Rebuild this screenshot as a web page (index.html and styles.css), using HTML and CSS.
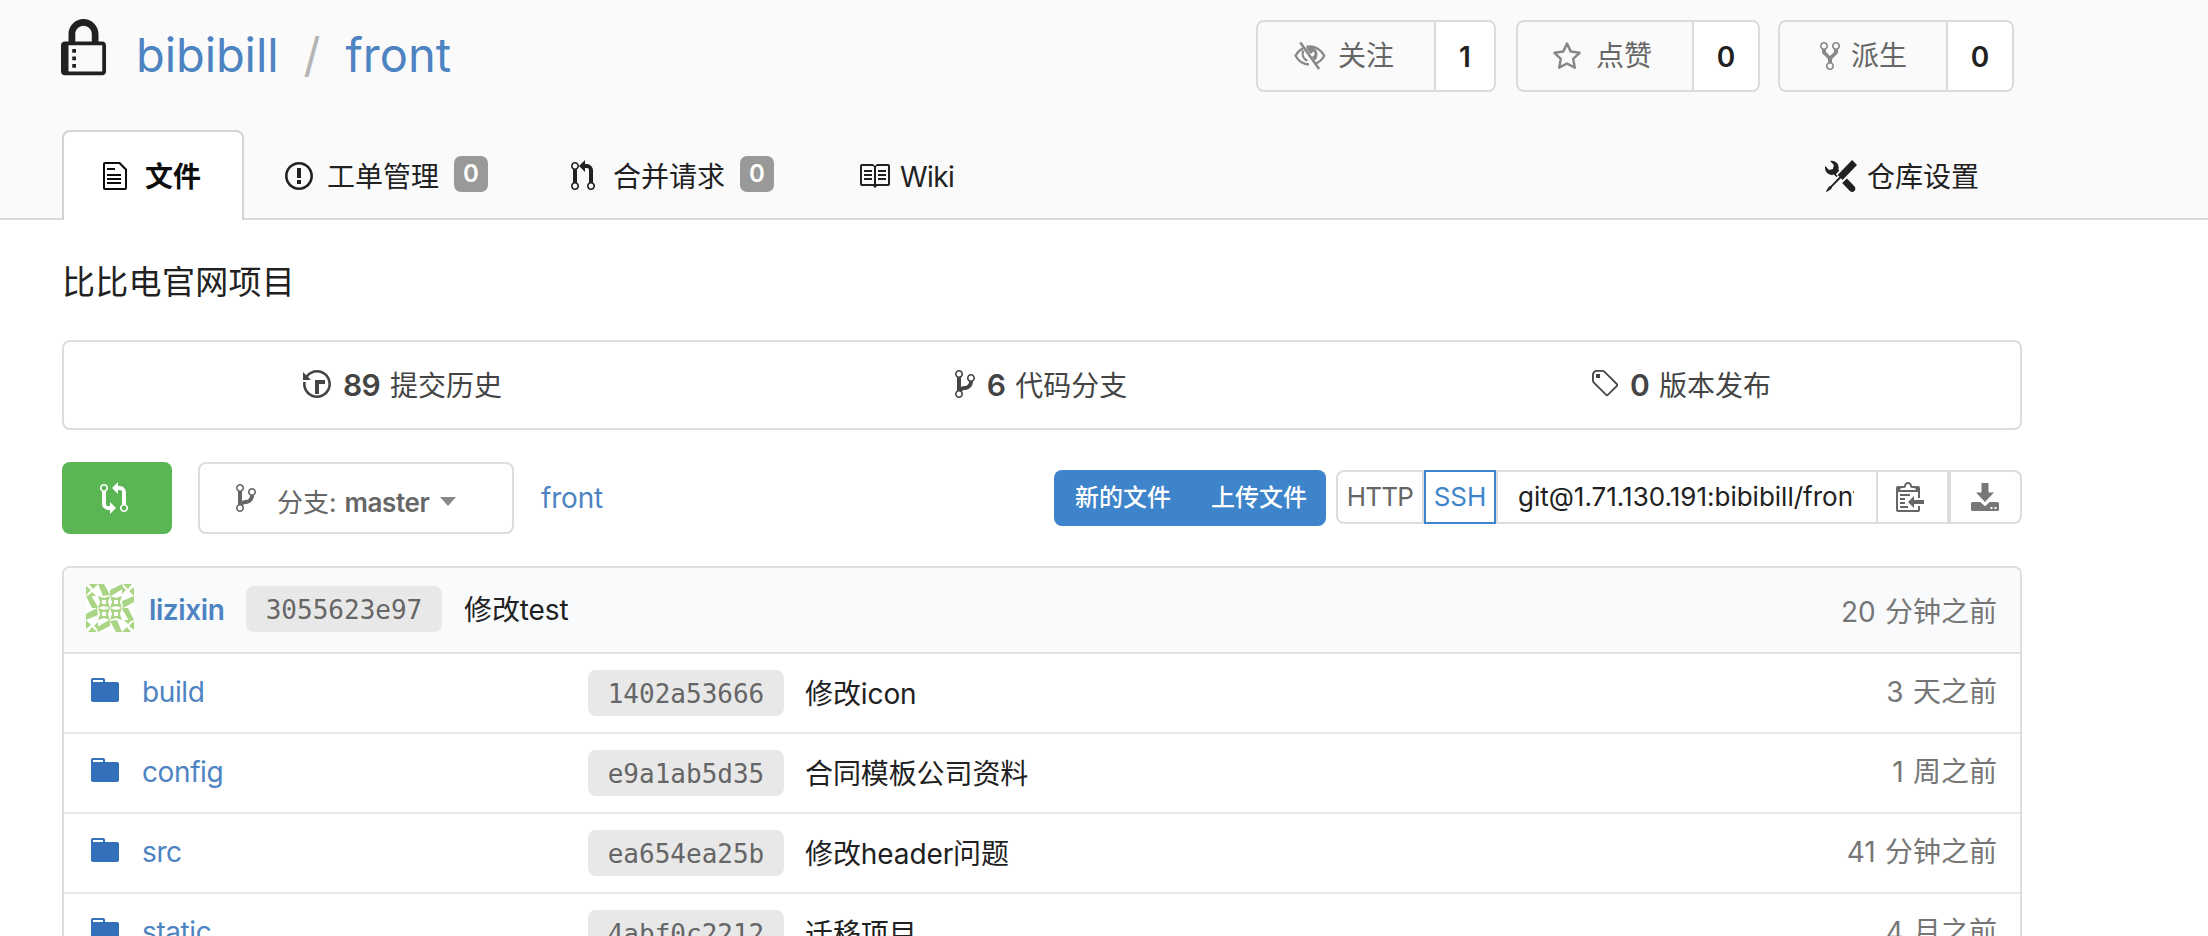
FILE: index.html
```html
<!DOCTYPE html>
<html lang="zh-CN">
<head>
<meta charset="utf-8">
<title>bibibill/front</title>
<link rel="stylesheet" href="styles.css">
</head>
<body>
<svg class="defs" width="0" height="0">
  <symbol id="i-branch" viewBox="0 0 10 16"><path d="M10 5c0-1.11-.89-2-2-2a1.993 1.993 0 0 0-1 3.72v.3c-.02.52-.23.98-.63 1.38-.4.4-.86.61-1.38.63-.83.02-1.48.16-2 .45V4.72a1.993 1.993 0 0 0-1-3.72C.88 1 0 1.89 0 3a2 2 0 0 0 1 1.72v6.56c-.59.35-1 .99-1 1.72 0 1.11.89 2 2 2 1.11 0 2-.89 2-2 0-.53-.2-1-.53-1.36.09-.06.48-.41.59-.47.25-.11.56-.17.94-.17 1.05-.05 1.95-.45 2.75-1.25S8.95 7.77 9 6.73h-.02C9.59 6.37 10 5.73 10 5zM2 1.8c.66 0 1.2.55 1.2 1.2 0 .65-.55 1.2-1.2 1.2C1.35 4.2.8 3.65.8 3c0-.65.55-1.2 1.2-1.2zm0 12.41c-.66 0-1.2-.55-1.2-1.2 0-.65.55-1.2 1.2-1.2.65 0 1.2.55 1.2 1.2 0 .65-.55 1.2-1.2 1.2zm6-8c-.66 0-1.2-.55-1.2-1.2 0-.65.55-1.2 1.2-1.2.65 0 1.2.55 1.2 1.2 0 .65-.55 1.2-1.2 1.2z"/></symbol>
  <symbol id="i-folder" viewBox="0 0 14 16"><path d="M13 4H7V3c0-.66-.31-1-1-1H1c-.55 0-1 .45-1 1v10c0 .55.45 1 1 1h12c.55 0 1-.45 1-1V5c0-.55-.45-1-1-1zM6 4H1V3h5v1z"/></symbol>
</svg>

<header class="header">
  <div class="container title-row">
    <svg class="lock" viewBox="0 0 12 16"><path d="M4 13H3v-1h1v1zm8-6v7c0 .55-.45 1-1 1H1c-.55 0-1-.45-1-1V7c0-.55.45-1 1-1h1V4c0-2.2 1.8-4 4-4s4 1.8 4 4v2h1c.55 0 1 .45 1 1zM3.8 6h4.41V4c0-1.22-.98-2.2-2.2-2.2-1.22 0-2.2.98-2.2 2.2v2H3.8zM11 7H2v7h9V7zM4 8H3v1h1V8zm0 2H3v1h1v-1z"/></svg>
    <div class="repo-title"><a class="owner">bibibill</a><span class="slash">/</span><a class="repo">front</a></div>
    <div class="actions">
      <div class="action watch">
        <span class="action-label"><svg class="i32" viewBox="0 0 32 32"><g fill="none" stroke="currentColor" stroke-width="2.3"><path d="M9 8.200C5.500 10 3 13 1.500 15.800c2.800 5 7.500 8.600 13.500 8.700M12.500 6.900C20.500 5 27.500 10 30.300 15.800c-1.900 3.500-4.800 6.300-8.300 7.700M9.300 10.500c-1.600 4-.2 8.300 4 10.300"/><path d="M6.300 2.500l18.800 26.500" stroke-width="2.500"/></g><path d="M12 8c5-2.500 11.500.5 11.500 6.500 0 2.500-1 4.700-2.800 6.200l-3-4.300c1.700.2 2.900-1 2.900-2.600 0-1.200-.6-2.200-1.700-2.600 0 1.500-1.300 2.700-2.900 2.300z"/></svg><span>关注</span></span><b class="action-count">1</b>
      </div>
      <div class="action star">
        <span class="action-label"><svg class="i30" viewBox="0 0 30 30"><path d="M15 2.600l3.800 8 8.800 1.200-6.400 6.100 1.600 8.800-7.800-4.200-7.800 4.200L8.800 17.900 2.400 11.800l8.800-1.200z" fill="none" stroke="currentColor" stroke-width="2.500" stroke-linejoin="round"/></svg><span>点赞</span></span><b class="action-count">0</b>
      </div>
      <div class="action fork">
        <span class="action-label"><svg class="i20" viewBox="0 0 10 16"><path d="M8 1a1.993 1.993 0 0 0-1 3.720V6L5 8 3 6V4.720A1.993 1.993 0 0 0 2 1a1.993 1.993 0 0 0-1 3.720V6.500l3 3v1.780A1.993 1.993 0 0 0 5 15a1.993 1.993 0 0 0 1-3.720V9.500l3-3V4.720A1.993 1.993 0 0 0 8 1zM2 4.200C1.340 4.200.8 3.650.8 3c0-.65.55-1.200 1.200-1.200.65 0 1.200.55 1.200 1.200 0 .65-.55 1.200-1.200 1.200zm3 10c-.66 0-1.200-.55-1.200-1.200 0-.65.55-1.200 1.200-1.200.65 0 1.200.55 1.200 1.200 0 .65-.55 1.200-1.200 1.200zm3-10c-.66 0-1.200-.55-1.200-1.200 0-.65.55-1.200 1.200-1.200.65 0 1.200.55 1.200 1.200 0 .65-.55 1.200-1.200 1.200z"/></svg><span>派生</span></span><b class="action-count">0</b>
      </div>
    </div>
  </div>
  <nav class="container tabs">
    <a class="tab active"><svg class="i24" viewBox="0 0 12 16"><path d="M6 5H2V4h4v1zM2 8h7V7H2v1zm0 2h7V9H2v1zm0 2h7v-1H2v1zm10-7.500V14c0 .55-.45 1-1 1H1c-.55 0-1-.45-1-1V2c0-.55.45-1 1-1h7.500L12 4.500zM11 5L8 2H1v12h10V5z"/></svg><span>文件</span></a>
    <a class="tab issues"><svg class="i28" viewBox="0 0 14 16"><path d="M7 2.300c3.140 0 5.700 2.560 5.700 5.700s-2.560 5.700-5.700 5.700A5.710 5.710 0 0 1 1.300 8c0-3.140 2.560-5.700 5.700-5.700zM7 1C3.140 1 0 4.140 0 8s3.140 7 7 7 7-3.140 7-7-3.140-7-7-7zm1 3H6v5h2V4zm0 6H6v2h2v-2z"/></svg><span>工单管理</span><b class="badge">0</b></a>
    <a class="tab pulls"><svg class="i24" viewBox="0 0 12 16"><path d="M11 11.280V5c-.03-.78-.34-1.470-.94-2.060C9.460 2.350 8.780 2.030 8 2H7V0L4 3l3 3V4h1c.27.02.48.11.69.31.21.2.3.42.31.69v6.280A1.993 1.993 0 0 0 10 15a1.993 1.993 0 0 0 1-3.720zm-1 2.920c-.66 0-1.200-.55-1.200-1.200 0-.65.55-1.200 1.200-1.200.65 0 1.200.55 1.200 1.200 0 .65-.55 1.200-1.200 1.200zM4 3c0-1.110-.89-2-2-2a1.993 1.993 0 0 0-1 3.720v6.560A1.993 1.993 0 0 0 2 15a1.993 1.993 0 0 0 1-3.720V4.720c.59-.34 1-.98 1-1.720zm-.8 10c0 .66-.55 1.200-1.200 1.200-.65 0-1.200-.55-1.200-1.200 0-.65.55-1.200 1.200-1.200.65 0 1.200.55 1.200 1.200zM2 4.200C1.340 4.200.8 3.650.8 3c0-.65.55-1.200 1.200-1.200.65 0 1.200.55 1.200 1.200 0 .65-.55 1.200-1.200 1.200z"/></svg><span>合并请求</span><b class="badge">0</b></a>
    <a class="tab wiki"><svg class="i32" viewBox="0 0 16 16"><path d="M3 5h4v1H3V5zm0 3h4V7H3v1zm0 2h4V9H3v1zm11-5h-4v1h4V5zm0 2h-4v1h4V7zm0 2h-4v1h4V9zm2-6v9c0 .55-.45 1-1 1H9.500l-1 1-1-1H2c-.55 0-1-.45-1-1V3c0-.55.45-1 1-1h5.500l1 1 1-1H15c.55 0 1 .45 1 1zm-8 .5L7.500 3H2v9h6V3.500zm7-.5H9.500l-.5.5V12h6V3z"/></svg><span>Wiki</span></a>
    <a class="tab settings"><svg class="i32" viewBox="0 0 16 16"><path d="M4.480 7.270c.26.26 1.280 1.330 1.280 1.330l.56-.58-.88-.91 1.690-1.800s-.76-.74-.43-.45c.32-1.190.03-2.510-.87-3.440C4.930.5 3.660.2 2.520.51l1.930 2-.51 1.960-1.890.52-1.930-1.990C-.19 4.170.1 5.480 1 6.400c.94.98 2.290 1.260 3.480.87zm6.440 1.940l-2.330 2.300 3.840 3.980c.31.33.73.49 1.140.49.41 0 .82-.16 1.140-.49.63-.65.63-1.700 0-2.350l-3.790-3.930zM16 2.530L13.550 0 6.330 7.460l.88.91-4.310 4.460-.99.53-1.390 2.270.35.37 2.200-1.440.51-1.020L7.900 9.080l.88.91L16 2.530z"/></svg><span>仓库设置</span></a>
  </nav>
</header>

<main class="container">
  <p class="description">比比电官网项目</p>

  <section class="stats">
    <a class="stat"><svg class="i28" viewBox="0 0 14 16"><path d="M8 13H6V6h5v2H8v5zM7 1C4.810 1 2.870 2.020 1.590 3.590L0 2v4h4L2.500 4.500C3.550 3.170 5.170 2.300 7 2.300c3.140 0 5.700 2.560 5.700 5.700s-2.560 5.700-5.700 5.700A5.710 5.710 0 0 1 1.300 8c0-.34.03-.67.09-1H.08C.03 7.330 0 7.660 0 8c0 3.860 3.140 7 7 7s7-3.140 7-7-3.140-7-7-7z"/></svg><b>89</b><span>提交历史</span></a>
    <a class="stat branches"><svg class="i20"><use href="#i-branch"/></svg><b>6</b><span>代码分支</span></a>
    <a class="stat releases"><svg class="i28" viewBox="0 0 14 16"><path d="M7.730 1.730C7.260 1.260 6.620 1 5.960 1H3.500C2.130 1 1 2.130 1 3.500v2.470c0 .66.27 1.300.73 1.770l6.060 6.060c.39.39 1.020.39 1.410 0l4.590-4.590a.996.996 0 0 0 0-1.410L7.730 1.730zM2.380 7.090c-.31-.3-.47-.7-.47-1.130V3.500c0-.88.72-1.590 1.590-1.590h2.470c.42 0 .83.16 1.130.47l6.140 6.130-4.730 4.730-6.130-6.150zM3.010 3h2v2H3V3h.01z"/></svg><b>0</b><span>版本发布</span></a>
  </section>

  <section class="toolbar">
    <a class="compare"><svg class="i28" viewBox="0 0 14 16"><path d="M5 12H4c-.27-.02-.48-.11-.69-.31-.21-.2-.3-.42-.31-.69V4.720A1.993 1.993 0 0 0 2 1a1.993 1.993 0 0 0-1 3.720V11c.03.78.34 1.470.94 2.060.6.59 1.280.91 2.060.94h1v2l3-3-3-3v2zM2 1.800c.66 0 1.200.55 1.200 1.200 0 .65-.55 1.200-1.200 1.200C1.340 4.200.8 3.650.8 3c0-.65.55-1.200 1.200-1.200zm11 9.480V5c-.03-.78-.34-1.470-.94-2.060-.6-.59-1.280-.91-2.060-.94H9V0L6 3l3 3V4h1c.27.02.48.11.69.31.21.2.3.42.31.69v6.280A1.993 1.993 0 0 0 12 15a1.993 1.993 0 0 0 1-3.720zm-1 2.920c-.66 0-1.200-.55-1.200-1.200 0-.65.55-1.200 1.200-1.200.65 0 1.200.55 1.200 1.200 0 .65-.55 1.200-1.200 1.200z"/></svg></a>
    <div class="branch-select"><svg class="i20"><use href="#i-branch"/></svg><span class="branch-text">分支:</span><b>master</b><i class="caret"></i></div>
    <a class="crumb">front</a>
    <div class="file-buttons"><a>新的文件</a><a>上传文件</a></div>
    <div class="clone">
      <button class="http">HTTP</button>
      <button class="ssh">SSH</button>
      <div class="url"><span>git@1.71.130.191:bibibill/front.git</span></div>
      <button class="copy"><svg class="i28" viewBox="0 0 14 16"><path d="M2 13h4v1H2v-1zm5-6H2v1h5V7zm2 3V8l-3 3 3 3v-2h5v-2H9zM4.500 9H2v1h2.500V9zM2 12h2.500v-1H2v1zm9 1h1v2c-.02.28-.11.52-.3.7-.19.18-.42.28-.7.3H1c-.55 0-1-.45-1-1V4c0-.55.45-1 1-1h3c0-1.110.89-2 2-2 1.110 0 2 .89 2 2h3c.55 0 1 .45 1 1v5h-1V6H1v9h10v-2zM2 5h8c0-.55-.45-1-1-1H8c-.55 0-1-.45-1-1s-.45-1-1-1-1 .45-1 1-.45 1-1 1H3c-.55 0-1 .45-1 1z"/></svg></button>
      <button class="download"><svg class="i28" viewBox="0 0 28 32"><path d="M10.500 3h7v9.500H23L14 22 5 12.500h5.500zM1.500 22h7.800l4.700 4.300 4.700-4.300h7.800q1.500 0 1.500 1.500v6q0 1.500-1.500 1.500h-25Q0 31 0 29.500v-6Q0 22 1.500 22zm18 5v2h2v-2zm4 0v2h2v-2z" fill-rule="evenodd"/></svg></button>
    </div>
  </section>

  <section class="files">
    <div class="row latest">
      <svg class="avatar" viewBox="0 0 48 48"><rect width="48" height="48" fill="#fff"/>
        <g fill="#a9d585">
          <g id="av-q"><path d="M12 0h6l6 11-7 1zM24 11V6l12-6 1.500 4.500L25 12zM3 0h9L7 5zM0 2v9l5-5zM2 12l4-4 4 4z"/><path fill-rule="evenodd" d="M12 12l6 2 6-2-2 6 2 6-6-2-6 2 2-6zM16 16v4h4v-4z"/></g>
          <use href="#av-q" transform="rotate(90 24 24)"/><use href="#av-q" transform="rotate(180 24 24)"/><use href="#av-q" transform="rotate(270 24 24)"/>
        </g>
      </svg>
      <b class="author">lizixin</b><code class="sha">3055623e97</code><span class="message">修改test</span><time>20 分钟之前</time>
    </div>
    <div class="row"><div class="name"><svg class="i28"><use href="#i-folder"/></svg><a>build</a></div><code class="sha">1402a53666</code><span class="message">修改icon</span><time>3 天之前</time></div>
    <div class="row"><div class="name"><svg class="i28"><use href="#i-folder"/></svg><a>config</a></div><code class="sha">e9a1ab5d35</code><span class="message">合同模板公司资料</span><time>1 周之前</time></div>
    <div class="row"><div class="name"><svg class="i28"><use href="#i-folder"/></svg><a>src</a></div><code class="sha">ea654ea25b</code><span class="message">修改header问题</span><time>41 分钟之前</time></div>
    <div class="row"><div class="name"><svg class="i28"><use href="#i-folder"/></svg><a>static</a></div><code class="sha">4abf0c2212</code><span class="message">迁移项目</span><time>4 月之前</time></div>
  </section>
</main>
</body>
</html>
```
FILE: styles.css
```css
* { box-sizing: border-box; }
html, body { margin: 0; height: 936px; overflow: hidden; }
body {
  font: 28px/40px Inter, "Noto Sans CJK SC", sans-serif;
  color: #212121;
  background: #fff;
  white-space: nowrap;
}
svg { display: block; flex: none; fill: currentColor; }
.defs { position: absolute; }
.i20 { width: 20px; height: 32px; }
.i24 { width: 24px; height: 32px; }
.i28 { width: 28px; height: 32px; }
.i30 { width: 30px; height: 30px; }
.i32 { width: 32px; height: 32px; }
.container { width: 1960px; margin-left: 62px; }

/* Header */
.header { height: 220px; background: #fafafa; border-bottom: 2px solid #d9d9d9; }
.title-row { display: flex; height: 130px; align-items: flex-start; }
.lock { width: 45px; height: 60px; margin: 19px 0 0 -1px; }
.repo-title { display: flex; margin: 23px 0 0 30px; font-size: 47px; line-height: 64px; }
.repo-title a { color: #4e83c2; }
.owner { letter-spacing: -.1px; }
.slash { width: 67px; text-align: center; color: #b5b5b5; }
.actions { display: flex; margin: 20px 8px 0 auto; }
.action { display: flex; height: 72px; border: 2px solid #dbdbdb; border-radius: 8px; overflow: hidden; color: #666; }
.action svg { color: #888; }
.action-label { display: flex; align-items: center; flex: none; height: 68px; }
.action-count { flex: 1; background: #fff; border-left: 2px solid #dbdbdb; text-align: center; line-height: 70px; font-weight: 600; color: #212121; }
.watch { width: 240px; }
.watch .action-label { width: 176px; padding-left: 36px; gap: 12px; }
.star { width: 244px; margin-left: 20px; }
.star .action-label { width: 174px; padding-left: 34px; gap: 14px; }
.fork { width: 236px; margin-left: 18px; }
.fork .action-label { width: 166px; padding-left: 40px; gap: 11px; }

/* Tabs */
.tabs { display: flex; height: 90px; align-items: center; }
.tab { display: flex; align-items: center; height: 90px; padding-top: 2px; }
.tab span { padding-top: 2px; }
.active { width: 182px; padding: 0 0 0 39px; gap: 18px; font-weight: 600; color: #0d0d0d; background: #fff; border: 2px solid #d4d4d5; border-bottom: 0; border-radius: 8px 8px 0 0; }
.issues { margin-left: 41px; gap: 14px; }
.pulls { margin-left: 83px; gap: 18px; }
.wiki { margin-left: 84px; gap: 10px; letter-spacing: -.6px; }
.settings { margin: 0 43px 0 auto; gap: 10px; }
.badge { width: 34px; height: 36px; margin: -4px 0 0 1px; border-radius: 7px; background: #999; color: #fff; font-size: 24px; line-height: 35px; text-align: center; font-weight: 600; }
.pulls .badge { margin-left: -3px; }

/* Summary */
.description { margin: 0; padding-top: 42px; height: 120px; font-size: 33px; line-height: 40px; letter-spacing: .3px; }
.stats { display: grid; grid-template-columns: 677px 600px 679px; height: 90px; border: 2px solid #ddd; border-radius: 8px; color: #444; }
.stat { display: flex; justify-content: center; align-items: center; }
.stat b { font-size: 30px; font-weight: 600; margin: 0 10px 0 12px; letter-spacing: -.8px; }
.stat span { padding-top: 2px; }
.stat svg { margin-top: -2px; }

/* Toolbar */
.toolbar { display: flex; margin-top: 32px; height: 72px; color: #666; }
.compare { width: 110px; padding: 20px 0 0 38px; background: #5ab655; color: #fff; border-radius: 8px; }
.branch-select { display: flex; width: 316px; margin-left: 26px; padding: 18px 0 0 36px; border: 2px solid #ddd; border-radius: 8px; font-size: 26px; }
.branch-text { margin: 1px 0 0 21px; }
.branch-select b { margin: 1px 0 0 8px; font-weight: 600; letter-spacing: -.4px; }
.caret { margin: 15px 0 0 11px; border: solid transparent; border-width: 9px 8px 0; border-top-color: #888; height: 0; }
.crumb { margin: 16px 0 0 27px; letter-spacing: -.2px; color: #4e83c2; }
.file-buttons { display: flex; width: 272px; height: 56px; margin: 8px 10px 0 auto; border-radius: 8px; background: #3d84ca; color: #fff; font-size: 24px; font-weight: 500; line-height: 55px; }
.file-buttons a { padding-left: 21px; width: 137px; }
.clone { display: flex; width: 686px; height: 54px; margin-top: 8px; font-size: 26px; }
.clone button { display: flex; align-items: center; justify-content: center; font: inherit; padding: 0; background: #fff; border: 2px solid #ddd; color: #666; }
.clone .http { width: 88px; border-radius: 8px 0 0 8px; letter-spacing: -.8px; }
.clone .ssh { width: 72px; border-color: #3d84ca; color: #3d84ca; }
.url { width: 380px; padding: 5px 22px 0 20px; border: solid #ddd; border-width: 2px 0 2px 2px; color: #212121; }
.url span { display: block; overflow: hidden; }
.clone .copy { width: 73px; padding-right: 5px; }
.clone .download { width: 73px; border-radius: 0 8px 8px 0; padding-right: 2px; color: #777; }
.clone svg { margin-top: -2px; }

/* File list */
.files { margin-top: 32px; border: 2px solid #ddd; border-bottom: 0; border-radius: 8px 8px 0 0; overflow: hidden; height: 370px; }
.row { display: flex; height: 80px; border-bottom: 2px solid #e8e8e8; }
.latest { height: 86px; background: #f9fafc; border-color: #e2e2e3; }
.row:last-child { height: 42px; border-bottom: 0; }
.avatar { width: 48px; height: 48px; margin: 16px 0 0 22px; }
.author { width: 81px; margin: 22px 0 0 15px; font-weight: 600; letter-spacing: -.4px; color: #4e83c2; }
.name { display: flex; width: 524px; padding-left: 27px; color: #3370b9; }
.name svg { margin-top: 20px; }
.name a { margin: 18px 0 0 23px; letter-spacing: -.4px; color: #4e83c2; }
.sha { width: 196px; height: 46px; margin: 16px 0 0; flex: none; border-radius: 8px; background: #e8e8e8; color: #666; text-align: center; font: 26px/48px "DejaVu Sans Mono", monospace; }
.latest .sha { margin: 18px 0 0 16px; }
.message { margin: 20px 0 0 21px; letter-spacing: -.1px; }
.latest .message { margin: 22px 0 0 22px; }
time { margin: 18px 23px 0 auto; color: #767676; word-spacing: 1.5px; }
.latest time { margin-top: 24px; }
```
